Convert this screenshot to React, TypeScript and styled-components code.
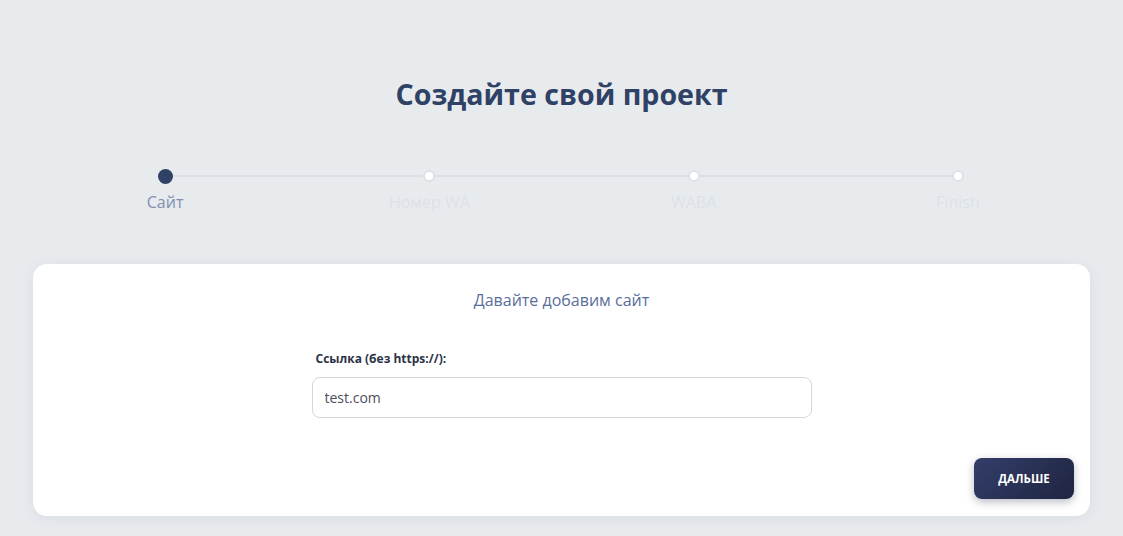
import styled, { createGlobalStyle } from 'styled-components';

const GlobalStyle = createGlobalStyle`
  body {
    margin: 0;
    background: #e8ebee;
    font-family: 'Open Sans', 'Noto Sans', sans-serif;
  }
`;

const steps = ['Сайт', 'Номер WA', 'WABA', 'Finish'];

function App() {
  return (
    <Page>
      <GlobalStyle />
      <Title>Создайте свой проект</Title>
      <Stepper>
        {steps.map((s, i) => (
          <Step key={s} $first={i === 0}>
            <Dot $active={i === 0} />
            <StepLabel $active={i === 0}>{s}</StepLabel>
          </Step>
        ))}
      </Stepper>
      <Card>
        <CardTitle>Давайте добавим сайт</CardTitle>
        <Field>
          <Label>Ссылка (без https://):</Label>
          <Input defaultValue="test.com" />
        </Field>
        <Footer>
          <Button>ДАЛЬШЕ</Button>
        </Footer>
      </Card>
    </Page>
  );
}

export default App;

const Page = styled.div`
  padding: 75px 33px 0;
  height: 536px;
  box-sizing: border-box;
  overflow: hidden;
`;

const Title = styled.h1`
  margin: 0;
  text-align: center;
  font-size: 28.6px;
  line-height: 38px;
  font-weight: 700;
  color: #2f4266;
`;

const Stepper = styled.div`
  display: grid;
  grid-template-columns: repeat(4, 1fr);
  margin-top: 56px;
`;

const Step = styled.div<{ $first: boolean }>`
  position: relative;
  display: flex;
  flex-direction: column;
  align-items: center;

  &::before {
    content: '';
    display: ${(p) => (p.$first ? 'none' : 'block')};
    position: absolute;
    top: 6px;
    right: 50%;
    width: 100%;
    height: 2px;
    background: #dce0e6;
  }
`;

const Dot = styled.div<{ $active: boolean }>`
  position: relative;
  z-index: 1;
  box-sizing: border-box;
  width: ${(p) => (p.$active ? '15px' : '12px')};
  height: ${(p) => (p.$active ? '15px' : '12px')};
  margin-top: ${(p) => (p.$active ? '0' : '1px')};
  margin-bottom: ${(p) => (p.$active ? '0' : '2px')};
  border-radius: 50%;
  background: ${(p) => (p.$active ? '#2f4266' : '#fff')};
  border: ${(p) => (p.$active ? 'none' : '2px solid #dde1e7')};
`;

const StepLabel = styled.div<{ $active: boolean }>`
  margin-top: 7px;
  font-size: 16px;
  line-height: 22px;
  color: ${(p) => (p.$active ? '#7e8fae' : '#dde1e7')};
`;

const Card = styled.div`
  margin-top: 51px;
  background: #fff;
  border-radius: 14px;
  box-shadow: 0 2px 14px rgba(40, 55, 90, 0.08);
  padding: 25px 16px 17px;
  display: flex;
  flex-direction: column;
  align-items: center;
`;

const CardTitle = styled.div`
  font-size: 16px;
  line-height: 22px;
  color: #5a6e9b;
`;

const Field = styled.div`
  width: 500px;
  margin-top: 40px;
  display: flex;
  flex-direction: column;
`;

const Label = styled.label`
  padding-left: 4px;
  font-size: 12px;
  line-height: 16px;
  font-weight: 700;
  color: #2c3347;
`;

const Input = styled.input`
  margin-top: 10px;
  box-sizing: border-box;
  width: 100%;
  height: 41px;
  border: 1px solid #d3d6db;
  border-radius: 8px;
  padding: 0 12px;
  font-family: inherit;
  font-size: 14px;
  color: #4a4f5a;
  outline: none;
`;

const Footer = styled.div`
  align-self: stretch;
  display: flex;
  justify-content: flex-end;
  margin-top: 40px;
`;

const Button = styled.button`
  width: 100px;
  height: 41px;
  border: none;
  border-radius: 8px;
  background: linear-gradient(135deg, #343e6a 0%, #1e2440 100%);
  box-shadow: 0 3px 8px rgba(30, 36, 64, 0.3);
  color: #fff;
  font-family: inherit;
  font-size: 11.5px;
  font-weight: 700;
  cursor: pointer;
`;
